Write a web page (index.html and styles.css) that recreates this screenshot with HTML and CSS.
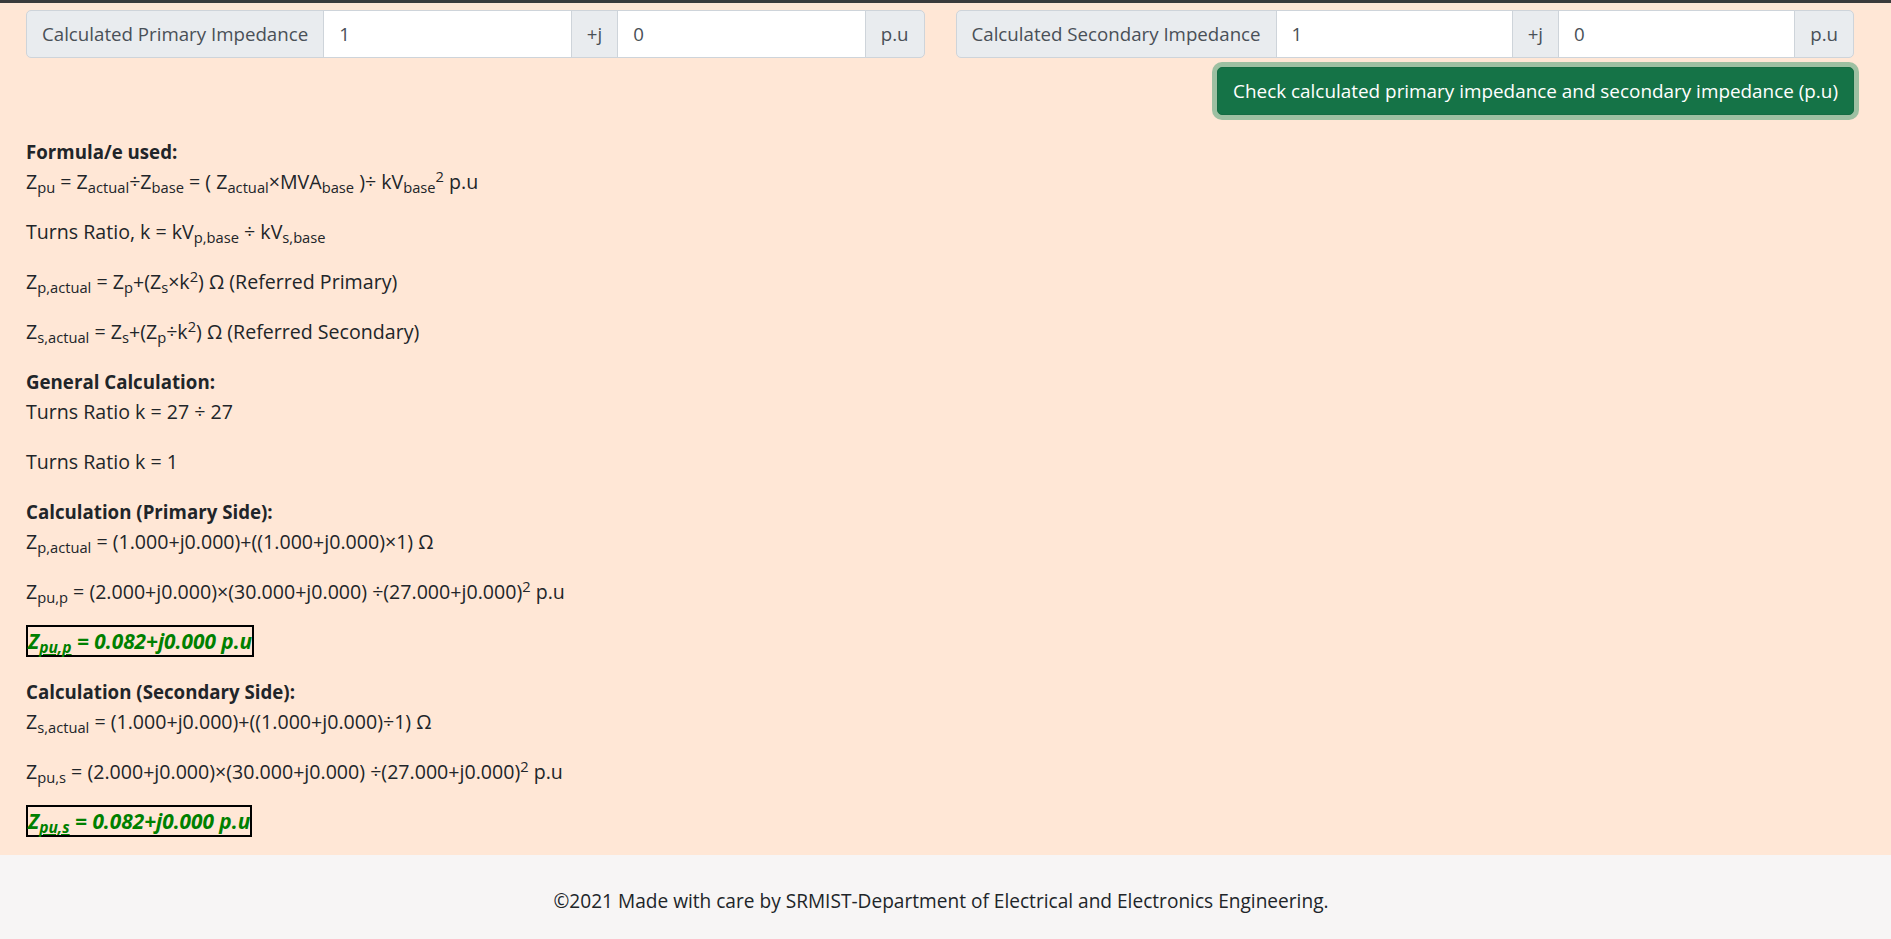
FILE: index.html
```html
<!DOCTYPE html>
<html lang="en">
<head>
<meta charset="utf-8">
<title>Per Unit Impedance</title>
<link rel="stylesheet" href="styles.css">
</head>
<body>
<div class="topbar"></div>
<main class="main">
  <div class="inputs-row">
    <div class="col">
      <div class="input-group">
        <span class="addon label">Calculated Primary Impedance</span>
        <input class="field" type="text" value="1">
        <span class="addon">+j</span>
        <input class="field" type="text" value="0">
        <span class="addon last">p.u</span>
      </div>
    </div>
    <div class="col">
      <div class="input-group">
        <span class="addon label">Calculated Secondary Impedance</span>
        <input class="field" type="text" value="1">
        <span class="addon">+j</span>
        <input class="field" type="text" value="0">
        <span class="addon last">p.u</span>
      </div>
      <div class="btn-row">
        <button class="btn-check" type="button">Check calculated primary impedance and secondary impedance (p.u)</button>
      </div>
    </div>
  </div>

  <div class="results">
    <p><strong>Formula/e used:</strong><br>Z<sub>pu</sub> = Z<sub>actual</sub>÷Z<sub>base</sub> = ( Z<sub>actual</sub>×MVA<sub>base</sub> )÷ kV<sub>base</sub><sup>2</sup> p.u</p>
    <p>Turns Ratio, k = kV<sub>p,base</sub> ÷ kV<sub>s,base</sub></p>
    <p>Z<sub>p,actual</sub> = Z<sub>p</sub>+(Z<sub>s</sub>×k<sup>2</sup>) Ω (Referred Primary)</p>
    <p>Z<sub>s,actual</sub> = Z<sub>s</sub>+(Z<sub>p</sub>÷k<sup>2</sup>) Ω (Referred Secondary)</p>
    <p><strong>General Calculation:</strong><br>Turns Ratio k = 27 ÷ 27</p>
    <p>Turns Ratio k = 1</p>
    <p><strong>Calculation (Primary Side):</strong><br>Z<sub>p,actual</sub> = (1.000+j0.000)+((1.000+j0.000)×1) Ω</p>
    <p>Z<sub>pu,p</sub> = (2.000+j0.000)×(30.000+j0.000) ÷(27.000+j0.000)<sup>2</sup> p.u</p>
    <p><span class="answer">Z<sub>pu,p</sub> = 0.082+j0.000 p.u</span></p>
    <p><strong>Calculation (Secondary Side):</strong><br>Z<sub>s,actual</sub> = (1.000+j0.000)+((1.000+j0.000)÷1) Ω</p>
    <p>Z<sub>pu,s</sub> = (2.000+j0.000)×(30.000+j0.000) ÷(27.000+j0.000)<sup>2</sup> p.u</p>
    <p><span class="answer">Z<sub>pu,s</sub> = 0.082+j0.000 p.u</span></p>
  </div>
</main>
<footer class="footer">©2021 Made with care by SRMIST-Department of Electrical and Electronics Engineering.</footer>
</body>
</html>
```

FILE: styles.css
```css
* { box-sizing: border-box; }

html, body {
  margin: 0;
  padding: 0;
}

body {
  font-family: "Open Sans", "Noto Sans", sans-serif;
  font-size: 18.7px;
  line-height: 30px;
  color: #212529;
  background: #f7f5f5;
  min-height: 100vh;
  display: flex;
  flex-direction: column;
}

.topbar {
  height: 3px;
  background: #3a3b3c;
}

.main {
  flex: 1;
  background: #ffe7d6;
  padding: 7px 37px 0 26px;
}

.inputs-row {
  display: grid;
  grid-template-columns: minmax(0, 1fr) minmax(0, 1fr);
  column-gap: 31px;
  align-items: start;
}

.col {
  min-width: 0;
}

.input-group {
  display: flex;
  height: 47.5px;
}

.addon {
  display: flex;
  align-items: center;
  flex: none;
  padding: 0 15px;
  background: #e9ecef;
  border: 1px solid #ced4da;
  color: #495057;
  white-space: nowrap;
  margin-left: -1px;
}

.addon.label {
  margin-left: 0;
  border-radius: 5px 0 0 5px;
}

.addon.last {
  border-radius: 0 5px 5px 0;
}

.field {
  flex: 1 1 0;
  width: 0;
  min-width: 0;
  margin-left: -1px;
  padding: 0 15px;
  font: inherit;
  color: #495057;
  background: #fff;
  border: 1px solid #ced4da;
  border-radius: 0;
  outline: none;
}

.btn-row {
  display: flex;
  justify-content: flex-end;
  margin-top: 9.5px;
}

.btn-check {
  font: inherit;
  font-size: 18.9px;
  color: #fff;
  background: #157347;
  border: 1px solid #146c43;
  border-radius: 5px;
  padding: 7.5px 15px;
  height: 47.5px;
  white-space: nowrap;
  box-shadow: 0 0 0 5px rgba(60, 153, 110, 0.5);
  cursor: pointer;
}

.results {
  margin-top: 22.5px;
  font-size: 19.6px;
}

.results p {
  margin: 0 0 20px;
}

.results p:last-child {
  margin-bottom: 17.5px;
}

.results strong {
  font-weight: 700;
  font-size: 18.7px;
  line-height: 20px;
}

sub, sup {
  position: relative;
  font-size: 75%;
  line-height: 0;
  vertical-align: baseline;
}

sub { bottom: -0.25em; }
sup { top: -0.5em; }

.answer {
  border: 2.5px solid #000;
  color: #008000;
  font-weight: 700;
  font-style: italic;
  font-size: 20.8px;
  line-height: 20px;
}

.answer sub {
  text-decoration: underline;
}

.footer {
  height: 84px;
  padding: 31px 9px 0 0;
  text-align: center;
  background: #f7f5f5;
  color: #212529;
  font-size: 19.1px;
}
```
